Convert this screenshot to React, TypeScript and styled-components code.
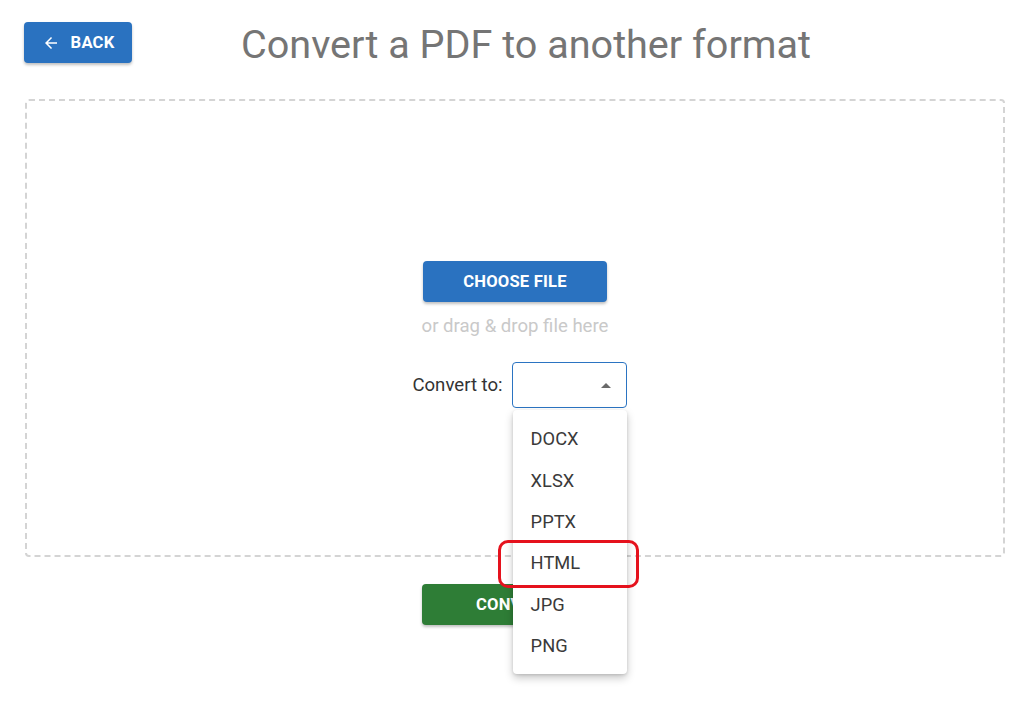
import React from "react";
import styled, { createGlobalStyle } from "styled-components";

const Global = createGlobalStyle`
  html, body { margin: 0; padding: 0; background: #fff; }
  body { font-family: Roboto, "Liberation Sans", Arial, sans-serif; }
  * { box-sizing: border-box; }
`;

const Page = styled.div`
  width: 1030px;
  height: 708px;
  padding: 22px 25px 0 24px;
  overflow: hidden;
`;

const Header = styled.header`
  display: flex;
  align-items: flex-start;
`;

const Button = styled.button<{ $color: string; $width: number }>`
  display: flex;
  align-items: center;
  justify-content: center;
  gap: 11px;
  width: ${(p) => p.$width}px;
  height: 41px;
  border: none;
  border-radius: 4px;
  background: ${(p) => p.$color};
  color: #fff;
  font-family: Roboto, "Liberation Sans", Arial, sans-serif;
  font-weight: 700;
  font-size: 16.6px;
  letter-spacing: 0.2px;
  text-transform: uppercase;
  box-shadow: 0 2px 3px rgba(0, 0, 0, 0.25);
  cursor: pointer;
  padding: 0;
`;

const Title = styled.h1`
  margin: 0 0 0 109px;
  font-size: 39.6px;
  line-height: 46px;
  font-weight: 400;
  color: #757575;
`;

const DropZone = styled.section`
  margin: 31px 0 0 1px;
  width: 980px;
  height: 458px;
  border: 2px dashed #d4d4d4;
  border-radius: 4px;
  display: flex;
  flex-direction: column;
  align-items: center;
  padding-top: 160px;
`;

const DropHint = styled.div`
  margin-top: 13px;
  font-size: 18.6px;
  color: #c9c9c9;
`;

const ConvertRow = styled.div`
  margin-top: 25px;
  display: flex;
  align-items: center;
  gap: 9px;
  margin-left: 9px;
`;

const Label = styled.span`
  font-size: 18.6px;
  color: #333;
`;

const SelectWrap = styled.div`
  position: relative;
`;

const SelectBox = styled.div`
  width: 115px;
  height: 46px;
  border: 1.5px solid #2b74c2;
  border-radius: 4px;
  display: flex;
  align-items: center;
  justify-content: flex-end;
  padding-right: 15px;
`;

const Caret = styled.span`
  width: 0;
  height: 0;
  border-left: 5px solid transparent;
  border-right: 5px solid transparent;
  border-bottom: 5px solid #6a6a6a;
`;

const Menu = styled.ul`
  position: absolute;
  top: 48px;
  left: 1px;
  width: 114px;
  margin: 0;
  padding: 8px 0;
  list-style: none;
  background: #fff;
  border-radius: 4px;
  box-shadow: 0 4px 8px rgba(0, 0, 0, 0.22), 0 1px 3px rgba(0, 0, 0, 0.12);
  z-index: 10;
`;

const MenuItem = styled.li`
  position: relative;
  height: 41.4px;
  display: flex;
  align-items: center;
  padding-left: 18px;
  font-size: 18.3px;
  color: #3a3a3a;
`;

const Highlight = styled.span`
  position: absolute;
  left: -15px;
  top: -2px;
  width: 141px;
  height: 48px;
  border: 3.5px solid #e5121d;
  border-radius: 10px;
  pointer-events: none;
`;

const Footer = styled.div`
  display: flex;
  justify-content: center;
  margin-top: 27px;
  padding-right: 1px;
`;

const BackArrow = () => (
  <svg width="18" height="18" viewBox="0 0 24 24" fill="#fff" aria-hidden>
    <path d="M20 11H7.83l5.59-5.59L12 4l-8 8 8 8 1.41-1.41L7.83 13H20v-2z" />
  </svg>
);

const formats = ["DOCX", "XLSX", "PPTX", "HTML", "JPG", "PNG"];

export default function App() {
  return (
    <Page>
      <Global />
      <Header>
        <Button $color="#2a72c0" $width={108}>
          <BackArrow />
          Back
        </Button>
        <Title>Convert a PDF to another format</Title>
      </Header>
      <DropZone>
        <Button $color="#2a72c0" $width={184}>
          Choose File
        </Button>
        <DropHint>or drag &amp; drop file here</DropHint>
        <ConvertRow>
          <Label>Convert to:</Label>
          <SelectWrap>
            <SelectBox>
              <Caret />
            </SelectBox>
            <Menu>
              {formats.map((f) => (
                <MenuItem key={f}>
                  {f}
                  {f === "HTML" && <Highlight />}
                </MenuItem>
              ))}
            </Menu>
          </SelectWrap>
        </ConvertRow>
      </DropZone>
      <Footer>
        <Button $color="#2e7d36" $width={184}>
          Convert
        </Button>
      </Footer>
    </Page>
  );
}
